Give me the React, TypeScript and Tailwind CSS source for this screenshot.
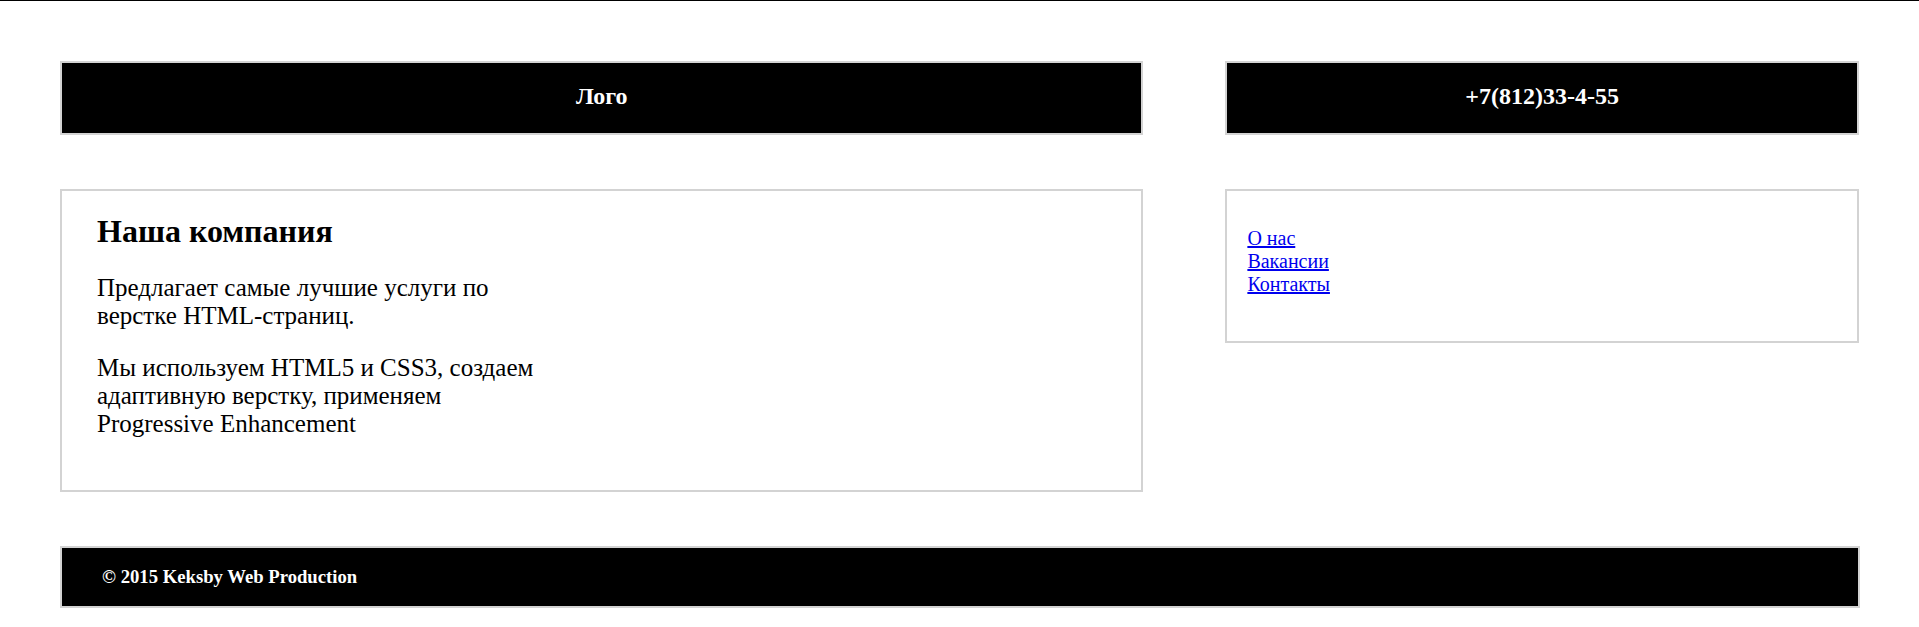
export default function App() {
  return (
    <div className="min-h-[627px] bg-white border-t border-black font-['Liberation_Serif','Times_New_Roman',serif] text-black">
      <div className="px-[60px] pt-[60px] pb-[18px]">
        <div className="flex gap-[82px]">
          <header className="w-[1084px] h-[74px] box-border bg-black border-2 border-[#d3d3d3] pt-[20px] text-center text-white text-[24px] font-bold leading-[27.6px]">
            Лого
          </header>
          <div className="w-[634px] h-[74px] box-border bg-black border-2 border-[#d3d3d3] pt-[20px] text-center text-white text-[24px] font-bold leading-[27.6px]">
            +7(812)33-4-55
          </div>
        </div>

        <div className="flex items-start gap-[82px] mt-[54px]">
          <main className="w-[1084px] box-border border-2 border-[#d3d3d3] pl-[35px] pt-[21.5px] pb-[52px]">
            <h2 className="text-[32px] font-bold leading-[36.8px]">Наша компания</h2>
            <p className="w-[450px] mt-[25px] text-[25px] leading-[28px]">
              Предлагает самые лучшие услуги по верстке HTML-страниц.
            </p>
            <p className="w-[450px] mt-[24px] text-[25px] leading-[28px]">
              Мы используем HTML5 и CSS3, создаем адаптивную верстку, применяем Progressive Enhancement
            </p>
          </main>
          <nav className="w-[634px] box-border border-2 border-[#d3d3d3] pl-[20px] pt-[36px] pb-[45px] text-[20px] leading-[23px]">
            <a href="#" className="block w-fit text-[#0000ee] underline">О нас</a>
            <a href="#" className="block w-fit text-[#0000ee] underline">Вакансии</a>
            <a href="#" className="block w-fit text-[#0000ee] underline">Контакты</a>
          </nav>
        </div>

        <footer className="mt-[54px] w-[1800px] h-[62px] box-border bg-black border-2 border-[#d3d3d3] flex items-center pl-[40px] text-white text-[18.7px] font-bold">
          © 2015 Keksby Web Production
        </footer>
      </div>
    </div>
  );
}
